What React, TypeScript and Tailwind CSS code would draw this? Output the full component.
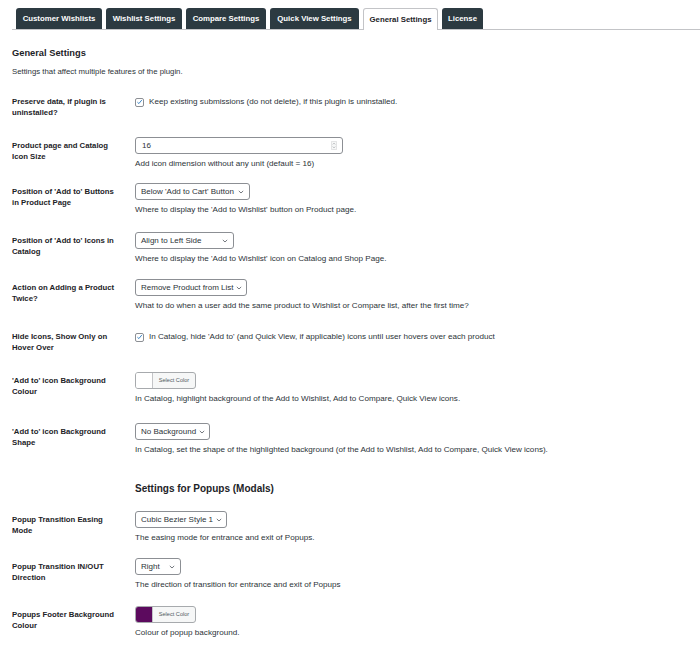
import React from "react";

const font = { fontFamily: '"Liberation Sans", Arial, sans-serif' };

function Chevron() {
  return (
    <svg width="6" height="4" viewBox="0 0 6 4" className="shrink-0">
      <path d="M0.8 0.9 L3 3 L5.2 0.9" fill="none" stroke="#50575e" strokeWidth="0.8" />
    </svg>
  );
}

function Select({ text, w }: { text: string; w: string }) {
  return (
    <div className={`flex h-[17px] items-center justify-between gap-[3px] rounded-[3px] border border-[#8c8f94] bg-white pl-[5px] pr-[5px] text-[8px] leading-[10px] text-[#2c3338] ${w}`}>
      <span className="whitespace-nowrap">{text}</span>
      <Chevron />
    </div>
  );
}

function Check() {
  return (
    <div className="flex h-[9px] w-[9px] shrink-0 items-center justify-center rounded-[2px] border border-[#8c8f94] bg-white">
      <svg width="8" height="8" viewBox="0 0 8 8">
        <path d="M1.6 4.2 L3.3 5.8 L6.6 1.8" fill="none" stroke="#3582c4" strokeWidth="1.1" />
      </svg>
    </div>
  );
}

function ColorBtn({ color }: { color: string }) {
  return (
    <div className="flex h-[17px] w-[61px] overflow-hidden rounded-[3px] border border-[#a7aaad] bg-[#f6f7f7]">
      <div className="w-[17px] border-r border-[#c3c4c7]" style={{ background: color }} />
      <div className="flex flex-1 items-center justify-center text-[5.6px] text-[#50575e]">Select Color</div>
    </div>
  );
}

function Desc({ children }: { children: React.ReactNode }) {
  return <div className="mt-[5px] text-[8.1px] leading-[10px] text-[#2c3338]">{children}</div>;
}

function Row({
  label,
  children,
  mt,
  labelPt = "pt-[3px]",
}: {
  label: React.ReactNode;
  children: React.ReactNode;
  mt: string;
  labelPt?: string;
}) {
  return (
    <div className={`flex ${mt}`}>
      <div className={`w-[123px] shrink-0 pr-[4px] text-[7.75px] font-bold leading-[11px] text-[#1d2327] ${labelPt}`}>{label}</div>
      <div className="flex-1">{children}</div>
    </div>
  );
}

export default function App() {
  const tabs = [
    { t: "Customer Wishlists", w: "w-[86px]" },
    { t: "Wishlist Settings", w: "w-[76px]" },
    { t: "Compare Settings", w: "w-[80px]" },
    { t: "Quick View Settings", w: "w-[89px]" },
    { t: "General Settings", w: "w-[75px]", active: true },
    { t: "License", w: "w-[41px]" },
  ];
  return (
    <div className="min-h-[646px] w-[700px] bg-white antialiased" style={font}>
      <div className="ml-[12px] flex h-[30px] items-end gap-[4px] border-b border-[#c3c4c7] pl-[4px]">
        {tabs.map((tab) => (
          <div
            key={tab.t}
            className={`flex h-[21px] items-center justify-center rounded-t-[3px] text-[7.8px] font-bold ${tab.w} ${
              tab.active
                ? "-mb-px h-[22px] border border-b-0 border-[#c3c4c7] bg-white text-[#1d2327]"
                : "bg-[#2c3a41] text-white"
            }`}
          >
            {tab.t}
          </div>
        ))}
      </div>

      <div className="px-[12px]">
        <div className="mt-[17px] text-[9.3px] font-bold leading-[12px] text-[#1d2327]">General Settings</div>
        <div className="mt-[8px] text-[7.8px] leading-[10px] text-[#2c3338]">Settings that affect multiple features of the plugin.</div>

        <Row mt="mt-[19px]" labelPt="pt-0" label={<>Preserve data, if plugin is<br />uninstalled?</>}>
          <div className="flex items-center gap-[5px] pt-[1px] text-[8.1px] leading-[10px] text-[#2c3338]">
            <Check />
            <span>Keep existing submissions (do not delete), if this plugin is uninstalled.</span>
          </div>
        </Row>

        <Row mt="mt-[19px]" label={<>Product page and Catalog<br />Icon Size</>}>
          <div className="flex h-[17px] w-[208px] items-center justify-between rounded-[3px] border border-[#8c8f94] bg-white pl-[6px] pr-[5px] text-[8px] leading-[10px] text-[#2c3338]">
            <span>16</span>
            <svg width="6" height="9" viewBox="0 0 6 9">
              <rect x="0.3" y="0.3" width="5.4" height="8.4" rx="1" fill="#f6f7f7" stroke="#c3c4c7" strokeWidth="0.5" />
              <path d="M1.8 3.4 L3 2.2 L4.2 3.4 M1.8 5.6 L3 6.8 L4.2 5.6" fill="none" stroke="#8c8f94" strokeWidth="0.6" />
            </svg>
          </div>
          <Desc>Add icon dimension without any unit (default = 16)</Desc>
        </Row>

        <Row mt="mt-[14px]" label={<>Position of 'Add to' Buttons<br />in Product Page</>}>
          <Select text="Below 'Add to Cart' Button" w="w-[115px]" />
          <Desc>Where to display the 'Add to Wishlist' button on Product page.</Desc>
        </Row>

        <Row mt="mt-[17px]" label={<>Position of 'Add to' Icons in<br />Catalog</>}>
          <Select text="Align to Left Side" w="w-[99px]" />
          <Desc>Where to display the 'Add to Wishlist' icon on Catalog and Shop Page.</Desc>
        </Row>

        <Row mt="mt-[15px]" label={<>Action on Adding a Product<br />Twice?</>}>
          <Select text="Remove Product from List" w="w-[112px]" />
          <Desc>What to do when a user add the same product to Wishlist or Compare list, after the first time?</Desc>
        </Row>

        <Row mt="mt-[20px]" labelPt="pt-0" label={<>Hide Icons, Show Only on<br />Hover Over</>}>
          <div className="flex items-center gap-[5px] pt-[1px] text-[8.1px] leading-[10px] text-[#2c3338]">
            <Check />
            <span>In Catalog, hide 'Add to' (and Quick View, if applicable) icons until user hovers over each product</span>
          </div>
        </Row>

        <Row mt="mt-[19px]" label={<>'Add to' icon Background<br />Colour</>}>
          <ColorBtn color="#ffffff" />
          <Desc><span className="mt-[5px] block">In Catalog, highlight background of the Add to Wishlist, Add to Compare, Quick View icons.</span></Desc>
        </Row>

        <Row mt="mt-[19px]" label={<>'Add to' icon Background<br />Shape</>}>
          <Select text="No Background" w="w-[75px]" />
          <Desc>In Catalog, set the shape of the highlighted background (of the Add to Wishlist, Add to Compare, Quick View icons).</Desc>
        </Row>

        <div className="ml-[123px] mt-[27px] text-[10px] font-bold leading-[14px] text-[#1d2327]">Settings for Popups (Modals)</div>

        <Row mt="mt-[15px]" label={<>Popup Transition Easing<br />Mode</>}>
          <Select text="Cubic Bezier Style 1" w="w-[92px]" />
          <Desc>The easing mode for entrance and exit of Popups.</Desc>
        </Row>

        <Row mt="mt-[15px]" label={<>Popup Transition IN/OUT<br />Direction</>}>
          <Select text="Right" w="w-[46px]" />
          <Desc>The direction of transition for entrance and exit of Popups</Desc>
        </Row>

        <Row mt="mt-[16px]" label={<>Popups Footer Background<br />Colour</>}>
          <ColorBtn color="#5c0a5e" />
          <Desc><span className="mt-[5px] block">Colour of popup background.</span></Desc>
        </Row>
      </div>
    </div>
  );
}
